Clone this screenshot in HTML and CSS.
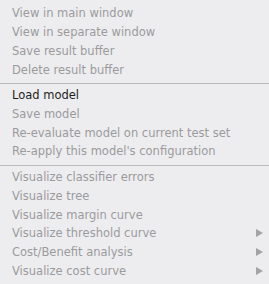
FILE: index.html
```html
<!DOCTYPE html>
<html lang="en">
<head>
    <meta charset="UTF-8">
    <title>Result list menu</title>
    <link rel="stylesheet" href="styles.css">
</head>
<body>

<div class="menu">
    <div class="item disabled">View in main window</div>
    <div class="item disabled">View in separate window</div>
    <div class="item disabled">Save result buffer</div>
    <div class="item disabled">Delete result buffer</div>

    <div class="separator"></div>

    <div class="item">Load model</div>
    <div class="item disabled">Save model</div>
    <div class="item disabled">Re-evaluate model on current test set</div>
    <div class="item disabled">Re-apply this model's configuration</div>

    <div class="separator"></div>

    <div class="item disabled">Visualize classifier errors</div>
    <div class="item disabled">Visualize tree</div>
    <div class="item disabled">Visualize margin curve</div>
    <div class="item disabled submenu">Visualize threshold curve <span class="arrow"></span></div>
    <div class="item disabled submenu">Cost/Benefit analysis <span class="arrow"></span></div>
    <div class="item disabled submenu">Visualize cost curve <span class="arrow"></span></div>
</div>

</body>
</html>
```

FILE: styles.css
```css
body {
    margin: 0;
    background-color: #ededef;
    font-family: "DejaVu Sans", Verdana, sans-serif;
}
.menu {
    width: 269px;
    height: 284px;
    padding-top: 4px;
    box-sizing: border-box;
    background-color: #ededef;
    overflow: hidden;
}
.item {
    display: flex;
    align-items: center;
    justify-content: space-between;
    height: 18.73px;
    padding: 0 6px 0 12px;
    font-size: 11.5px;
    color: #1e1e1e;
    white-space: nowrap;
}
.item.disabled {
    color: #9b9b9d;
}
.separator {
    height: 1px;
    margin: 4px 0 2px 0;
    background-color: #b9b9bb;
}
.arrow {
    width: 0;
    height: 0;
    border-top: 4px solid transparent;
    border-bottom: 4px solid transparent;
    border-left: 7px solid #a3a3a5;
}
```
